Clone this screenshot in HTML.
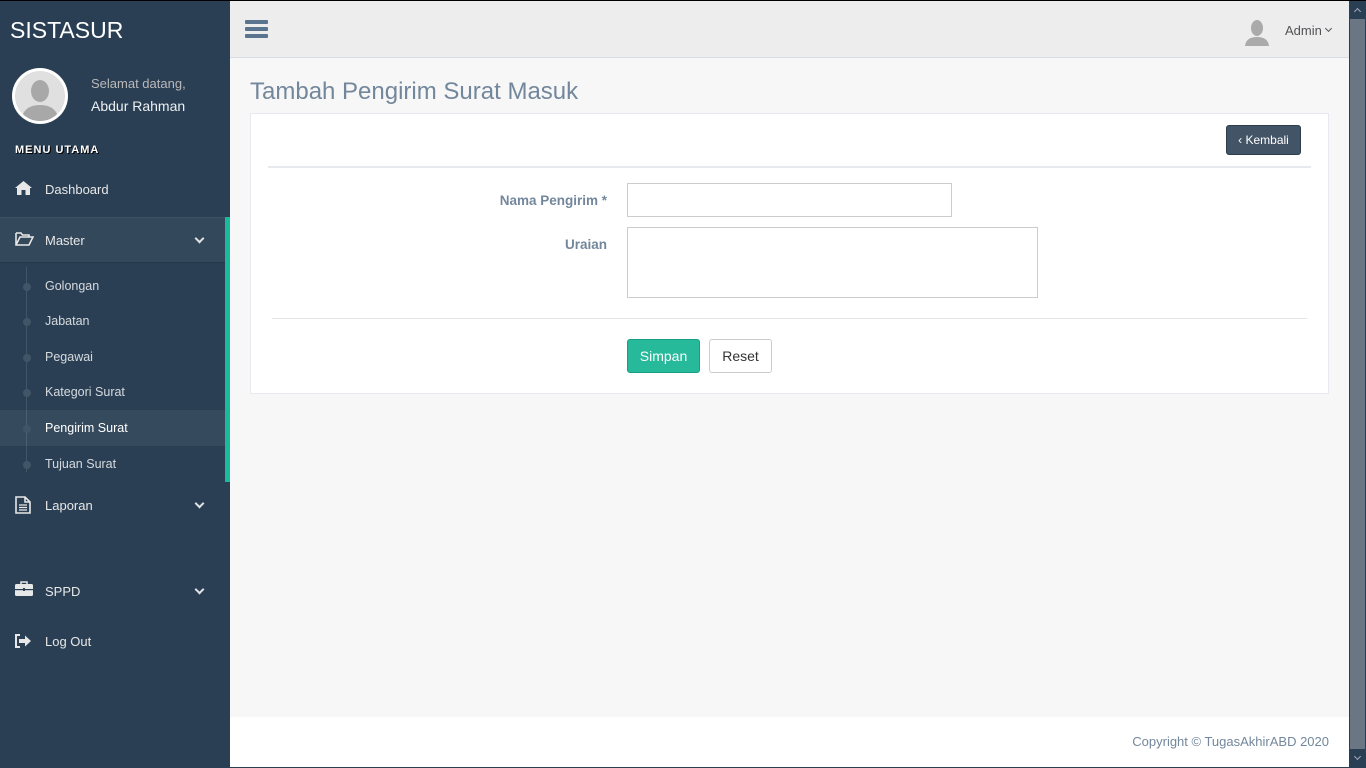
<!DOCTYPE html>
<html><head><meta charset="utf-8"><style>
*{box-sizing:border-box;margin:0;padding:0}
body{width:1366px;height:768px;overflow:hidden;font-family:"Liberation Sans",sans-serif;font-size:13px;background:#2a3f54;position:relative}
.abs{position:absolute}
#side{left:0;top:1px;width:230px;height:766px;background:#2a3f54;color:#ECF0F1}
#main{left:230px;top:1px;width:1119px;height:766px;background:#f7f7f7}
#top{left:0;top:0;width:1119px;height:57px;background:#ededed;border-bottom:1px solid #d9dee4}
.menu{position:absolute;left:45px;color:#E7E7E7;font-size:13px}
.sub{position:absolute;left:45px;color:rgba(255,255,255,.8);font-size:12.5px}
.dot{position:absolute;left:23px;width:8px;height:8px;border-radius:50%;background:#425567}
.chev{position:absolute;left:196px;width:7px;height:7px;border-right:2px solid #dfe3e7;border-bottom:2px solid #dfe3e7;transform:rotate(45deg)}
</style></head><body>
<div class="abs" style="left:0;top:0;width:1366px;height:1px;background:#000"></div>
<div id="side" class="abs">
 <div class="abs" style="left:10px;top:16px;font-size:23px;color:#fff">SISTASUR</div>
 <div class="abs" style="left:12px;top:67px;width:56px;height:56px;border-radius:50%;background:#fff;padding:3px">
  <svg width="50" height="50" viewBox="0 0 50 50"><defs><clipPath id="c"><circle cx="25" cy="25" r="25"/></clipPath></defs><circle cx="25" cy="25" r="25" fill="#e0e0e0"/><g clip-path="url(#c)"><ellipse cx="25" cy="20" rx="9" ry="11" fill="#a8a8a8"/><path d="M6 50 Q8 34 25 34 Q42 34 44 50 Z" fill="#a8a8a8"/></g></svg>
 </div>
 <div class="abs" style="left:91px;top:75px;color:#BAB8B8;font-size:13px">Selamat datang,</div>
 <div class="abs" style="left:91px;top:97px;color:#ECF0F1;font-size:14px">Abdur Rahman</div>
 <div class="abs" style="left:15px;top:143px;font-size:11px;font-weight:bold;letter-spacing:1px;color:#fff;text-shadow:1px 1px #000">MENU UTAMA</div>
 <svg class="abs" style="left:15px;top:180px" width="17" height="14" viewBox="0 0 17 14"><path d="M8.5 0 L17 7 L15 7 L15 14 L10.5 14 L10.5 9 L6.5 9 L6.5 14 L2 14 L2 7 L0 7 Z" fill="#e7e7e7"/></svg>
 <div class="menu" style="top:181px">Dashboard</div>
 <div class="abs" style="left:0;top:216px;width:230px;height:265px;border-right:5px solid #1ABB9C"></div>
 <div class="abs" style="left:0;top:216px;width:225px;height:46px;background:rgba(255,255,255,.05);border-top:1px solid #3d5165;border-bottom:1px solid #23384b"></div>
 <svg class="abs" style="left:15px;top:231px" width="19" height="14" viewBox="0 0 19 14"><path d="M1 1 H6 L7.5 3 H14 V5 M1 1 V13 H14 L18 5 H5 L1 13" fill="none" stroke="#e7e7e7" stroke-width="1.6"/></svg>
 <div class="menu" style="top:232px">Master</div>
 <div class="chev" style="top:234px"></div>
 <div class="abs" style="left:26px;top:266px;width:1px;height:205px;background:#425567"></div>
 <div class="abs" style="left:0;top:409px;width:225px;height:36px;background:rgba(255,255,255,.06)"></div>
 <div class="dot" style="top:282px"></div><div class="sub" style="top:278px">Golongan</div>
 <div class="dot" style="top:317px"></div><div class="sub" style="top:313px">Jabatan</div>
 <div class="dot" style="top:353px"></div><div class="sub" style="top:349px">Pegawai</div>
 <div class="dot" style="top:388px"></div><div class="sub" style="top:384px">Kategori Surat</div>
 <div class="dot" style="top:424px"></div><div class="sub" style="top:420px;color:#fff">Pengirim Surat</div>
 <div class="dot" style="top:460px"></div><div class="sub" style="top:456px">Tujuan Surat</div>
 <svg class="abs" style="left:15px;top:495px" width="16" height="18" viewBox="0 0 16 18"><path d="M1 1 H10 L15 6 V17 H1 Z M10 1 V6 H15" fill="none" stroke="#e7e7e7" stroke-width="1.6"/><path d="M4 9H12M4 11.5H12M4 14H12" stroke="#e7e7e7" stroke-width="1.2"/></svg>
 <div class="menu" style="top:497px">Laporan</div>
 <div class="chev" style="top:499px"></div>
 <svg class="abs" style="left:15px;top:580px" width="18" height="15" viewBox="0 0 18 15"><path d="M6 3V1H12V3" fill="none" stroke="#e7e7e7" stroke-width="1.5"/><rect x="0" y="3" width="18" height="12" rx="1.5" fill="#e7e7e7"/><rect x="0" y="8" width="18" height="1.2" fill="#2a3f54"/><rect x="8" y="7" width="2" height="3" fill="#2a3f54"/></svg>
 <div class="menu" style="top:583px">SPPD</div>
 <div class="chev" style="top:585px"></div>
 <svg class="abs" style="left:15px;top:633px" width="17" height="14" viewBox="0 0 17 14"><path d="M5 1H1V13H5" fill="none" stroke="#e7e7e7" stroke-width="2"/><path d="M4 5H10V1.5L16 7L10 12.5V9H4Z" fill="#e7e7e7"/></svg>
 <div class="menu" style="top:633px">Log Out</div>
</div>
<div id="main" class="abs">
 <div id="top" class="abs">
  <div class="abs" style="left:15px;top:19px;width:23px;height:4px;background:#5A738E;border-radius:1px;box-shadow:0 7px #5A738E,0 14px #5A738E"></div>
  <svg class="abs" style="left:1013px;top:17px" width="28" height="28" viewBox="0 0 28 28"><ellipse cx="14" cy="10" rx="6" ry="8" fill="#aaa"/><path d="M2 28 Q3 19 14 19 Q25 19 26 28Z" fill="#aaa"/></svg>
  <div class="abs" style="left:1055px;top:22px;color:#515356;font-size:13px">Admin</div>
  <div class="abs" style="left:1096px;top:25px;width:5px;height:5px;border-right:1px solid #515356;border-bottom:1px solid #515356;transform:rotate(45deg)"></div>
 </div>
 <div class="abs" style="left:20px;top:77px;font-size:24px;color:#73879C">Tambah Pengirim Surat Masuk</div>
 <div class="abs" style="left:20px;top:112px;width:1079px;height:281px;background:#fff;border:1px solid #E6E9ED">
  <div class="abs" style="left:975px;top:11px;width:75px;height:30px;background:#435466;border:1px solid #2C3E50;border-radius:3px;color:#fff;font-size:12px;line-height:28px;text-align:center">‹ Kembali</div>
  <div class="abs" style="left:17px;top:52px;width:1043px;height:2px;background:#E6E9ED"></div>
  <div class="abs" style="left:190px;top:79px;width:166px;text-align:right;font-weight:bold;color:#73879C;font-size:13.5px">Nama Pengirim *</div>
  <div class="abs" style="left:376px;top:69px;width:325px;height:34px;border:1px solid #ccc"></div>
  <div class="abs" style="left:200px;top:123px;width:156px;text-align:right;font-weight:bold;color:#73879C;font-size:13.5px">Uraian</div>
  <div class="abs" style="left:376px;top:113px;width:411px;height:71px;border:1px solid #ccc"></div>
  <div class="abs" style="left:21px;top:204px;width:1035px;height:1px;background:#e5e5e5"></div>
  <div class="abs" style="left:376px;top:225px;width:73px;height:34px;background:#26B99A;border:1px solid #169F85;border-radius:3px;color:#fff;font-size:14px;line-height:32px;text-align:center">Simpan</div>
  <div class="abs" style="left:458px;top:225px;width:63px;height:34px;background:#fff;border:1px solid #ccc;border-radius:3px;color:#333;font-size:14px;line-height:32px;text-align:center">Reset</div>
 </div>
 <div class="abs" style="left:0;top:716px;width:1119px;height:50px;background:#fff"></div>
 <div class="abs" style="right:20px;top:733px;color:#73879C;font-size:13px">Copyright © TugasAkhirABD 2020</div>
</div>
<div class="abs" style="left:1349px;top:1px;width:17px;height:766px;background:#2a3f54"></div>
<div class="abs" style="left:1350px;top:19px;width:15px;height:730px;background:#6b7684"></div>
<div class="abs" style="left:1355px;top:9px;width:5px;height:5px;border-left:1px solid #aab;border-top:1px solid #aab;transform:rotate(45deg)"></div>
<div class="abs" style="left:1355px;top:754px;width:5px;height:5px;border-right:1px solid #aab;border-bottom:1px solid #aab;transform:rotate(45deg)"></div>
</body></html>
